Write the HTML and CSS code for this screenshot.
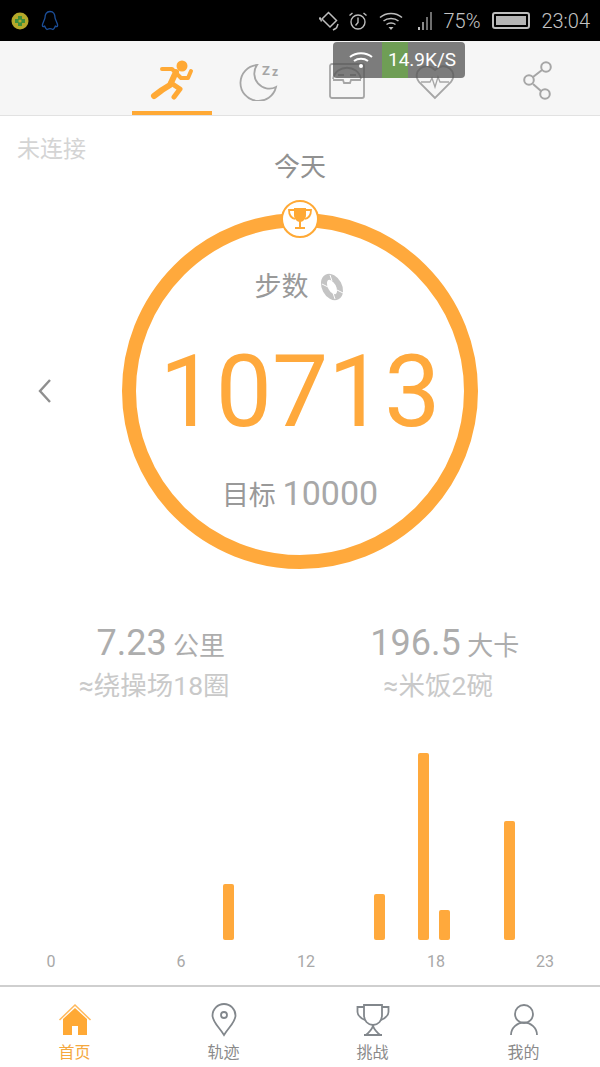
FILE: index.html
```html
<!DOCTYPE html>
<html lang="en">
<head>
    <meta charset="UTF-8">
    <meta name="viewport" content="width=device-width, initial-scale=1.0">
    <title>今天</title>
    <link rel="stylesheet" href="styles.css">
</head>
<body>
    <div class="status-bar">
        <div class="status-left">
            <svg width="18" height="18" viewBox="0 0 18 18"><circle cx="9" cy="9" r="8.500" fill="#b5a92a"/><path d="M9 4v10M4 9h10" stroke="#3f8f3a" stroke-width="4"/><circle cx="9" cy="9" r="1.600" fill="#b5a92a"/></svg>
            <svg width="18" height="22" viewBox="0 0 18 22" fill="none" stroke="#1c4f9a" stroke-width="1.300"><path d="M9 1.500c-3.600 0-5 3-5 6 0 2-2.600 5.500-2.600 8 0 1.400 1 1.200 2.200 .6.600 1.400 1.400 3 2.400 3.400 1-.4 1.600-.8 3-.8s2 .4 3 .8c1-.4 1.800-2 2.400-3.400 1.200 .6 2.200 .8 2.200-.6 0-2.500-2.600-6-2.600-8 0-3-1.400-6-5-6z"/></svg>
        </div>
        <div class="status-right">
            <svg class="s-rotate" width="20" height="20" viewBox="0 0 20 20" fill="none" stroke="#bdbdbd" stroke-width="1.500"><path d="M9.500 1.500l8 8-6.500 6.500-8-8z"/><path d="M1 6.500l1.500 4M19 13l-1.500 4M14 19l3.500-2M1 6.500l-.5 2"/></svg>
            <svg class="s-alarm" width="20" height="20" viewBox="0 0 20 20" fill="none" stroke="#bdbdbd" stroke-width="1.400"><circle cx="10" cy="11" r="7"/><path d="M10 6.500v5l-2.500 3M1.500 4.500l3-2.500M18.500 4.500l-3-2.500"/></svg>
            <svg class="s-wifi" width="24" height="20" viewBox="0 0 24 20" fill="none" stroke="#bdbdbd" stroke-width="1.500"><path d="M1 6.500c6-5.500 16-5.500 22 0M4.500 10c4-3.500 11-3.500 15 0M7.500 13.500c2.500-2 6.500-2 9 0"/><path d="M9.500 16h5l-2.500 3z" fill="#bdbdbd" stroke="none"/></svg>
            <svg class="s-signal" width="16" height="20" viewBox="0 0 16 20"><rect x="1" y="16" width="2" height="3" fill="#bdbdbd"/><rect x="5" y="11" width="2" height="8" fill="#8a8a8a"/><rect x="9" y="6" width="2" height="13" fill="#6e6e6e"/><rect x="13" y="1" width="2" height="18" fill="#6e6e6e"/></svg>
            <span class="s-text s-level">75%</span>
            <div class="battery"><div class="battery-fill"></div></div>
            <span class="s-text s-clock">23:04</span>
        </div>
    </div>

    <div class="speed-pill">
        <svg width="26" height="20" viewBox="0 0 26 20" fill="none" stroke="#fff" stroke-width="2"><path d="M2 7c6-5 16-5 22 0M6 11c4-3 10-3 14 0"/><circle cx="13" cy="16" r="2" fill="#fff" stroke="none"/></svg>
        <span class="speed-value">14.9K/S</span>
    </div>

    <div class="top-tabs">
        <div class="top-tab active">
            <svg width="46" height="44" viewBox="0 0 46 44" fill="none" stroke="#ffa935" stroke-width="5" stroke-linecap="round" stroke-linejoin="round">
                <circle cx="33" cy="8" r="5.500" fill="#ffa935" stroke="none"/>
                <path d="M13 11h10l9 9h7l3-7" stroke-width="4"/>
                <path d="M27 14l-6 13-8 5-8 6" stroke-width="6"/>
                <path d="M22 25l9 6-6 8"/>
            </svg>
        </div>
        <div class="top-tab">
            <svg width="44" height="40" viewBox="0 0 44 40" fill="none" stroke="#a6a6a6" stroke-width="1.800">
                <path d="M19 4A18 18 0 1 0 38 26A15 15 0 0 1 19 4z"/>
                <text x="24" y="14" class="zz">Z</text>
                <text x="34" y="15" class="zz small">z</text>
            </svg>
        </div>
        <div class="top-tab">
            <svg width="40" height="40" viewBox="0 0 40 40" fill="none" stroke="#a6a6a6" stroke-width="1.800">
                <rect x="3" y="3" width="34" height="34" rx="2"/>
                <path d="M6 18c3-15 25-15 28 0"/>
                <path d="M6 19h10l1 3h6l1-3h10M11 14h6M23 14h6"/>
            </svg>
        </div>
        <div class="top-tab">
            <svg width="44" height="40" viewBox="0 0 44 40" fill="none" stroke="#a6a6a6" stroke-width="1.800">
                <path d="M22 37L6 21C-2 11 12-1 22 9C32-1 46 11 38 21z"/>
                <path d="M8 21h9l2-4 3 9 3-10 2 5h9" stroke-width="1.300"/>
            </svg>
        </div>
        <div class="top-tab share">
            <svg width="34" height="42" viewBox="0 0 34 42" fill="none" stroke="#a6a6a6" stroke-width="2">
                <circle cx="25" cy="7" r="4.800"/><circle cx="8" cy="20" r="4.800"/><circle cx="24" cy="34" r="4.800"/>
                <path d="M21 10l-9 7M12 24l8 7"/>
            </svg>
        </div>
    </div>

    <div class="main">
        <div class="day-row">
            <span class="conn">未连接</span>
            <span class="day">今天</span>
        </div>

        <div class="ring-wrap">
            <svg class="back" width="16" height="26" viewBox="0 0 16 26" fill="none" stroke="#8f8f8f" stroke-width="2.400"><path d="M13 2L3 13l10 11"/></svg>
            <div class="ring">
                <div class="badge">
                    <svg width="26" height="24" viewBox="0 0 26 24" fill="#ffa935">
                        <path d="M7 1h12v7c0 4-3 7-6 7s-6-3-6-7z"/>
                        <path d="M7 3H2c0 5 2 8 6 9M19 3h5c0 5-2 8-6 9" fill="none" stroke="#ffa935" stroke-width="1.800"/>
                        <path d="M12 14h2v6h-2zM8 20h10v2H8z"/>
                    </svg>
                </div>
                <div class="ring-label">
                    <span>步数</span>
                    <svg width="28" height="30" viewBox="0 0 28 30" fill="none" stroke="#c4c4c4" stroke-width="6"><ellipse cx="14" cy="15" rx="7" ry="11" transform="rotate(-28 14 15)"/><path d="M4 12l6 3M12 3l2 6M25 21l-6-3M17 27l-2-6" stroke="#fff" stroke-width="1"/></svg>
                </div>
                <div class="steps">10713</div>
                <div class="goal">目标 <span class="goal-num">10000</span></div>
            </div>
        </div>

        <div class="stats">
            <div class="stat">
                <div class="stat-main first"><span class="stat-num">7.23</span> 公里</div>
                <div class="stat-sub">≈绕操场18圈</div>
            </div>
            <div class="stat">
                <div class="stat-main"><span class="stat-num">196.5</span> 大卡</div>
                <div class="stat-sub rice">≈米饭2碗</div>
            </div>
        </div>

        <div class="chart">
            <div class="bar h8" style="height: 56px"></div>
            <div class="bar h15" style="height: 46px"></div>
            <div class="bar h17" style="height: 187px"></div>
            <div class="bar h18" style="height: 30px"></div>
            <div class="bar h21" style="height: 119px"></div>
        </div>
        <div class="axis">
            <span>0</span><span>6</span><span>12</span><span>18</span><span>23</span>
        </div>
    </div>

    <div class="bottom-nav">
        <div class="nav-item active">
            <svg width="34" height="34" viewBox="0 0 34 34"><path d="M1.500 17L17 2l15.500 15" fill="none" stroke="#ffb95c" stroke-width="1.500"/><path d="M5 16L17 5l12 11v16H20v-9h-6v9H5z" fill="#ffa935"/></svg>
            <span>首页</span>
        </div>
        <div class="nav-item">
            <svg width="34" height="34" viewBox="0 0 34 34" fill="none" stroke="#82878c" stroke-width="1.800"><path d="M17 32C12 24 5.500 19 5.500 12.500a11.500 11.500 0 0 1 23 0C28.500 19 22 24 17 32z"/><circle cx="17" cy="12" r="3"/></svg>
            <span>轨迹</span>
        </div>
        <div class="nav-item">
            <svg width="34" height="34" viewBox="0 0 34 34" fill="none" stroke="#82878c" stroke-width="1.800"><path d="M8 2h18v10c0 6-4 10-9 10S8 18 8 12z"/><path d="M8 4H1.500v5c0 3 3 6 7.500 8M26 4h6.500v5c0 3-3 6-7.500 8"/><path d="M17 22c0 4-3 6-7 10h14c-4-4-7-6-7-10zM8 32h18"/></svg>
            <span>挑战</span>
        </div>
        <div class="nav-item last">
            <svg width="34" height="34" viewBox="0 0 34 34" fill="none" stroke="#82878c" stroke-width="1.800"><circle cx="17" cy="11" r="9"/><path d="M4 32c0-7 6-12.500 13-12.500S30 25 30 32"/></svg>
            <span>我的</span>
        </div>
    </div>
</body>
</html>
```
FILE: styles.css
```css
* {
    box-sizing: border-box;
}
body {
    margin: 0;
    width: 600px;
    height: 1067px;
    overflow: hidden;
    position: relative;
    background: white;
    font-family: Roboto, "Noto Sans CJK SC", sans-serif;
    color: #a3a3a3;
}
svg {
    display: block;
    flex: none;
}

/* status bar */
.status-bar {
    height: 41px;
    background: #000;
    display: flex;
    justify-content: space-between;
    align-items: center;
    padding: 0 10px 0 11px;
}
.status-left {
    display: flex;
    align-items: center;
    gap: 12px;
}
.status-right {
    display: flex;
    align-items: center;
}
.s-alarm {
    margin-left: 9px;
}
.s-wifi {
    margin-left: 11px;
}
.s-signal {
    margin-left: 14px;
}
.s-text {
    font-size: 20px;
    font-weight: 300;
    color: #c4c4c4;
}
.s-level {
    margin-left: 10px;
}
.battery {
    width: 38px;
    height: 17px;
    margin-left: 12px;
    border: 2px solid #bdbdbd;
    border-radius: 3px;
    padding: 2px;
}
.battery-fill {
    height: 100%;
    background: #b5b5b5;
}
.s-clock {
    margin-left: 11px;
}

/* floating speed meter */
.speed-pill {
    position: absolute;
    left: 333px;
    top: 42px;
    width: 132px;
    height: 36px;
    background: rgba(85, 85, 85, 0.76);
    border-radius: 4px;
    display: flex;
    align-items: center;
    padding-left: 15px;
    z-index: 2;
}
.speed-value {
    margin-left: 8px;
    padding-left: 6px;
    width: 75px;
    line-height: 36px;
    font-size: 19px;
    color: white;
    background: linear-gradient(90deg, #6f9e55 26px, transparent 26px);
}

/* top tabs */
.top-tabs {
    height: 75px;
    background: #f6f6f6;
    border-bottom: 1px solid #e2e2e2;
    display: flex;
    padding-left: 132px;
    gap: 7.5px;
}
.top-tab {
    width: 80px;
    height: 74px;
    display: flex;
    justify-content: center;
    align-items: center;
    padding-top: 5px;
}
.top-tab.active {
    border-bottom: 4px solid #ffa935;
    padding-top: 8px;
}
.top-tab.share {
    margin-left: 15.5px;
}
.zz {
    font-size: 13px;
    fill: #a6a6a6;
    stroke: none;
    font-weight: 700;
}
.zz.small {
    font-size: 12px;
}

/* main */
.day-row {
    height: 97px;
    position: relative;
    text-align: center;
    padding-top: 33px;
    font-size: 26px;
    line-height: 36px;
    color: #919191;
}
.conn {
    position: absolute;
    left: 17px;
    top: 16px;
    font-size: 23px;
    color: #d4d4d4;
}
.ring-wrap {
    position: relative;
    display: flex;
    justify-content: center;
}
.back {
    position: absolute;
    left: 37px;
    top: 165px;
}
.ring {
    position: relative;
    width: 356px;
    height: 356px;
    border: 14px solid #ffa93c;
    border-radius: 50%;
    display: flex;
    flex-direction: column;
    align-items: center;
    padding-top: 42px;
}
.badge {
    position: absolute;
    left: 145px;
    top: -27px;
    width: 38px;
    height: 38px;
    border: 2px solid #ffa935;
    border-radius: 50%;
    background: white;
    display: flex;
    justify-content: center;
    align-items: center;
}
.ring-label {
    display: flex;
    align-items: center;
    gap: 9px;
    font-size: 27px;
    line-height: 36px;
    color: #999;
}
.steps {
    margin-top: 32px;
    font-size: 100px;
    line-height: 110px;
    color: #ffa93c;
}
.goal {
    margin-top: 26px;
    font-size: 27px;
    line-height: 40px;
    color: #999;
}
.goal-num {
    font-size: 34px;
    color: #a8a8a8;
}

/* distance and calories */
.stats {
    margin-top: 51px;
    display: flex;
    padding: 0 10px 0 9px;
}
.stat {
    width: 50%;
    text-align: center;
}
.stat-main {
    font-size: 26px;
    line-height: 46px;
    color: #adadad;
}
.stat-main.first {
    padding-left: 13px;
}
.stat-num {
    font-size: 36px;
}
.stat-sub {
    font-size: 26.5px;
    line-height: 38px;
    color: #c9c9c9;
    margin-top: -2px;
}
.stat-sub.rice {
    padding-right: 13px;
}

/* hourly chart */
.chart {
    height: 200px;
    margin-top: 35px;
    padding-left: 44.5px;
    display: grid;
    grid-template-columns: repeat(24, 21.65px);
    align-items: end;
    justify-items: center;
}
.bar {
    width: 11px;
    grid-row: 1;
    background: #ffa93c;
    border-radius: 2px;
}
.h8 { grid-column: 9; }
.h15 { grid-column: 16; }
.h17 { grid-column: 18; }
.h18 { grid-column: 19; }
.h21 { grid-column: 22; }
.axis {
    display: flex;
    padding-left: 21px;
    margin-top: 12px;
    font-size: 16px;
    line-height: 20px;
    color: #a8a8a8;
}
.axis span {
    width: 60px;
    text-align: center;
}
.axis span:nth-child(2) {
    margin-left: 70px;
}
.axis span:nth-child(3) {
    margin-left: 65px;
}
.axis span:nth-child(4) {
    margin-left: 70px;
}
.axis span:nth-child(5) {
    margin-left: 49px;
}

/* bottom nav */
.bottom-nav {
    position: absolute;
    left: 0;
    right: 0;
    bottom: 0;
    height: 82px;
    border-top: 2px solid #cfcfcf;
    background: white;
    display: flex;
    padding: 16px 0 0 0;
}
.nav-item {
    width: 149px;
    display: flex;
    flex-direction: column;
    align-items: center;
    font-size: 16px;
    line-height: 22px;
    color: #8a8a8a;
}
.nav-item.last {
    margin-left: 2px;
}
.nav-item span {
    margin-top: 5px;
}
.nav-item.active {
    color: #f5a83e;
}
```
